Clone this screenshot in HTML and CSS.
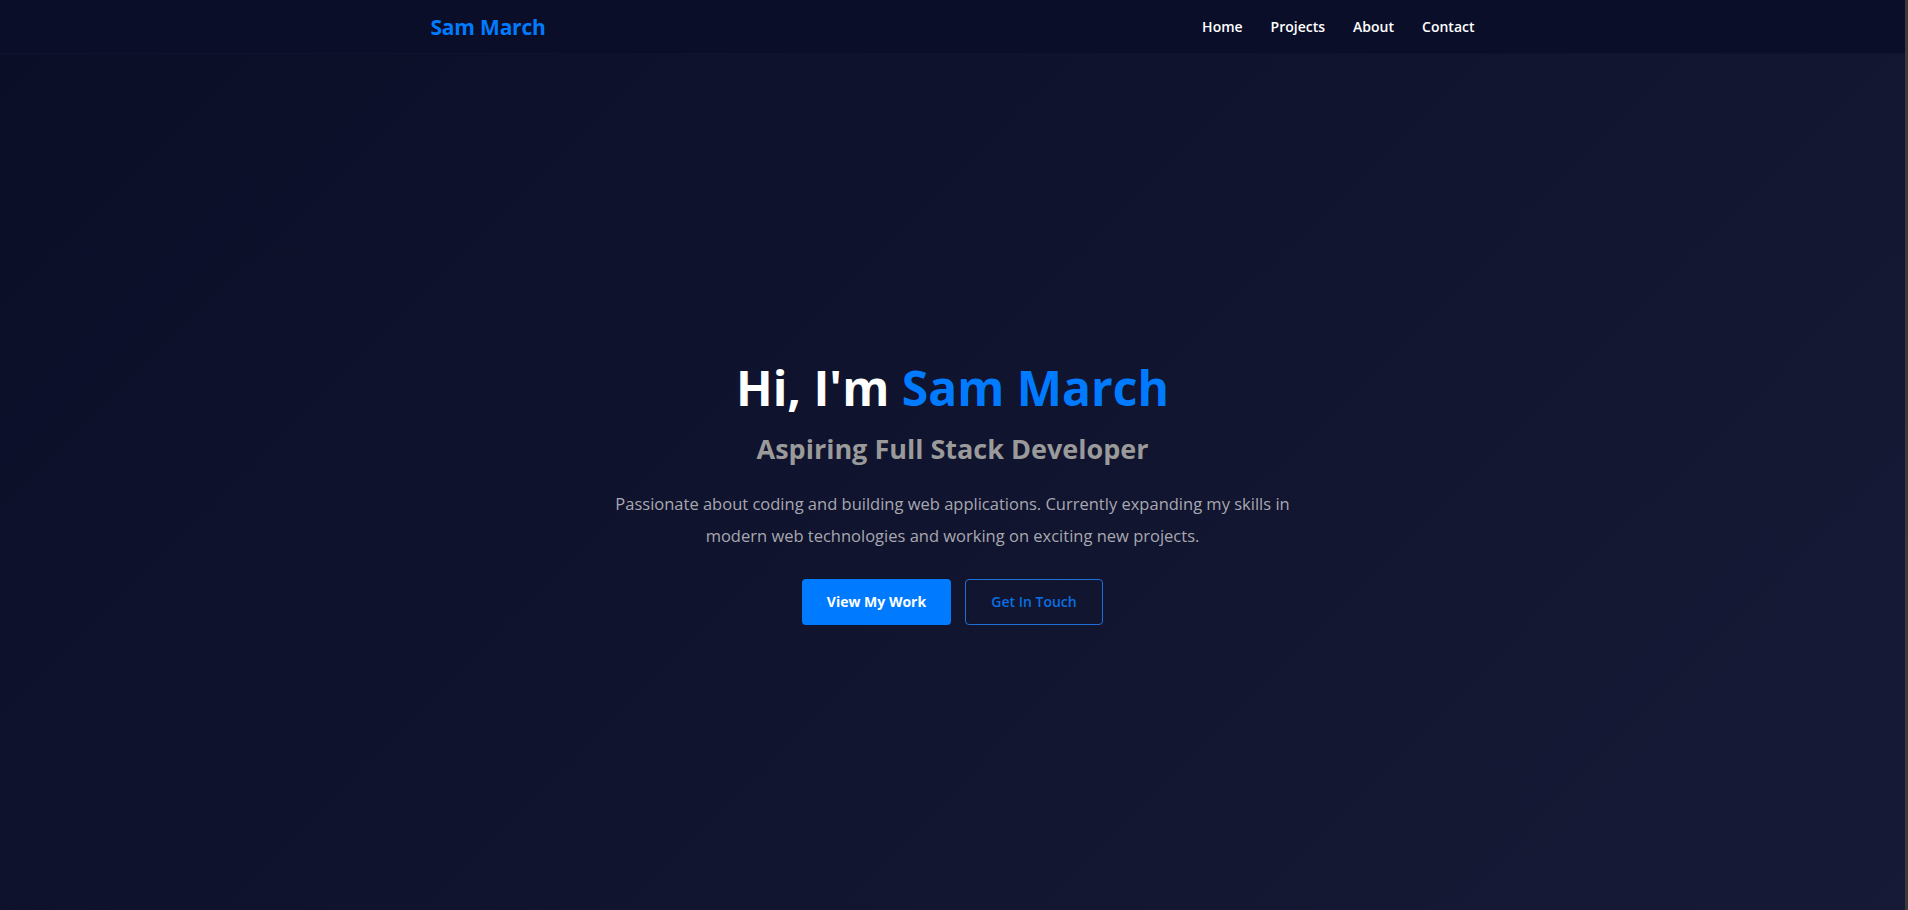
FILE: index.html
```html
<!DOCTYPE html>
<html lang="en">
<head>
<meta charset="utf-8">
<title>Sam March</title>
<link rel="stylesheet" href="styles.css">
</head>
<body>
<div class="page">
  <header class="navbar">
    <div class="container nav-inner">
      <a class="logo" href="#">Sam March</a>
      <nav class="nav-links">
        <a href="#">Home</a>
        <a href="#">Projects</a>
        <a href="#">About</a>
        <a href="#">Contact</a>
      </nav>
    </div>
  </header>
  <section class="hero">
    <h1 class="hero-title">Hi, I'm <span class="accent">Sam March</span></h1>
    <h2 class="hero-subtitle">Aspiring Full Stack Developer</h2>
    <p class="hero-text">Passionate about coding and building web applications. Currently expanding my skills in modern web technologies and working on exciting new projects.</p>
    <div class="hero-buttons">
      <a class="btn btn-primary" href="#">View My Work</a>
      <a class="btn btn-outline" href="#">Get In Touch</a>
    </div>
  </section>
</div>
</body>
</html>
```
FILE: styles.css
```css
* { box-sizing: border-box; }
html, body { margin: 0; padding: 0; height: 100%; }
body {
  font-family: "Open Sans", "Noto Sans", sans-serif;
  background: #3a3a3a;
  color: #fff;
  overflow: hidden;
}
.page {
  width: calc(100% - 3px);
  height: 910px;
  display: flex;
  flex-direction: column;
  background: linear-gradient(135deg, #0a0e27 0%, #161a36 100%);
}
a { text-decoration: none; }
.navbar {
  height: 54px;
  background: #0a0e29;
  border-bottom: 1px solid rgba(255,255,255,0.02);
  flex: none;
}
.container {
  max-width: 1140px;
  margin: 0 auto;
  padding: 0 48px;
}
.nav-inner {
  height: 100%;
  display: flex;
  align-items: center;
  justify-content: space-between;
}
.logo {
  color: #007bff;
  font-weight: 700;
  font-size: 21px;
  letter-spacing: -0.2px;
}
.nav-links {
  display: flex;
  gap: 28px;
}
.nav-links a {
  color: #fff;
  font-weight: 600;
  font-size: 14px;
}
.hero {
  flex: 1;
  display: flex;
  flex-direction: column;
  align-items: center;
  justify-content: center;
  text-align: center;
  padding-top: 20px;
}
.hero-title {
  margin: 0;
  font-size: 48px;
  font-weight: 700;
  line-height: 1.2;
  color: #fff;
}
.accent { color: #007bff; }
.hero-subtitle {
  margin: 14px 0 0;
  font-size: 27px;
  font-weight: 700;
  line-height: 1.3;
  color: #9a9a9a;
}
.hero-text {
  margin: 22px 0 0;
  max-width: 700px;
  font-size: 16.5px;
  line-height: 32px;
  color: #a8a8b0;
}
.hero-buttons {
  margin-top: 27px;
  display: flex;
  gap: 14px;
}
.btn {
  display: inline-flex;
  align-items: center;
  justify-content: center;
  height: 46px;
  border-radius: 4px;
  font-size: 14px;
  font-weight: 700;
}
.btn-primary {
  width: 149px;
  background: #007bff;
  color: #fff;
}
.btn-outline {
  width: 138px;
  border: 1px solid #1f6fd6;
  color: #0a6fe0;
  font-weight: 600;
}
```
